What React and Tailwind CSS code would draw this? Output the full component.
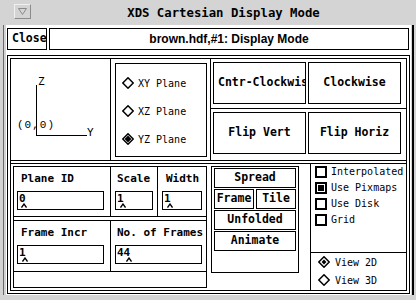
const boldMono = "font-['DejaVu_Sans_Mono',monospace] font-bold";
const thinMono = "font-['DejaVu_Sans_Mono',monospace]";

function Caret({ left }) {
  return (
    <svg
      width="6"
      height="5"
      viewBox="0 0 6 5"
      className="absolute top-[11px]"
      style={{ left }}
    >
      <path d="M0.5 4.5 L3 1 L5.5 4.5" fill="none" stroke="black" strokeWidth="1.3" />
    </svg>
  );
}

function Field({ label, value, ml, w, pl, caret, labelClass = '' }) {
  return (
    <div className="h-full overflow-hidden">
      <div className={`${boldMono} text-[11px] leading-[14px] whitespace-nowrap ${labelClass}`} style={{ paddingLeft: pl }}>
        {label}
      </div>
      <div
        className="relative mt-[5px] h-[19px] border border-black"
        style={{ marginLeft: ml, width: w }}
      >
        <span className={`${boldMono} text-[11px] leading-[13px] pl-[1px] block`}>{value}</span>
        <Caret left={caret} />
      </div>
    </div>
  );
}

function Diamond({ mode }) {
  return (
    <svg width="12" height="12" viewBox="0 0 12 12" className="shrink-0">
      <path d="M6 0.8 L11.2 6 L6 11.2 L0.8 6 Z" fill="white" stroke="black" strokeWidth="1.5" />
      {mode === 'full' && <path d="M6 2.6 L9.4 6 L6 9.4 L2.6 6 Z" fill="black" />}
      {mode === 'dot' && <path d="M6 3.6 L8.4 6 L6 8.4 L3.6 6 Z" fill="black" />}
    </svg>
  );
}

function Check({ label, on }) {
  return (
    <div className="h-[16px] flex items-center pl-[4px]">
      <div className="w-[12px] h-[12px] border-2 border-black flex items-center justify-center shrink-0">
        {on && <div className="w-[6px] h-[6px] bg-black" />}
      </div>
      <span className={`${thinMono} text-[10px] ml-[4px] leading-[12px]`}>{label}</span>
    </div>
  );
}

function SmallBtn({ children, className = '' }) {
  return (
    <div className={`h-[20px] border border-black flex items-center justify-center ${boldMono} text-[11.5px] ${className}`}>
      {children}
    </div>
  );
}

export default function App() {
  return (
    <div className="w-[416px] h-[300px] bg-[#d4d4d4] overflow-hidden flex flex-col">
      {/* title bar */}
      <div className="h-[25px] flex items-start shrink-0">
        <div className="ml-[14px] mt-[4px] w-[17px] h-[15px] border border-t-[#f0f0f0] border-l-[#f0f0f0] border-r-[#8c8c8c] border-b-[#8c8c8c] flex items-center justify-center">
          <svg width="9" height="7" viewBox="0 0 9 7">
            <path d="M0.5 0.5 H8.5 L4.5 6.5 Z" fill="none" stroke="#8a8a8a" />
          </svg>
        </div>
        <div className={`flex-1 text-center pt-[5px] ${boldMono} text-[12.3px] leading-[16px]`}>
          XDS Cartesian Display Mode
        </div>
      </div>

      <div className="flex h-[270px]">
        <div className="w-[3px]" />
        <div className="w-[1px] bg-[#6a6a6a]" />
        <div className="w-[2px]" />

        {/* window body */}
        <div className="w-[405px] bg-white flex flex-col">
          <div className="flex ml-[1px] mt-[3px] h-[22px] shrink-0">
            <div className={`w-[40px] border border-black overflow-hidden whitespace-nowrap pl-[4px] flex items-center ${boldMono} text-[11.5px]`}>
              Close
            </div>
            <div className="ml-[2px] w-[360px] border border-black flex items-center justify-center font-['Liberation_Sans',sans-serif] font-bold text-[12px]">
              brown.hdf,#1: Display Mode
            </div>
          </div>

          <div className="ml-[1px] mt-[5px] w-[403px] h-[239px] border border-black p-[2px]">
            <div className="h-full border border-black flex flex-col">
              {/* top section */}
              <div className="h-[102px] border-b border-black flex shrink-0">
                <div className="w-[100px] border-r border-black relative">
                  <span className={`absolute left-[27px] top-[15px] ${thinMono} text-[11px]`}>Z</span>
                  <div className="absolute left-[25px] top-[26px] w-[1px] h-[51px] bg-black" />
                  <div className="absolute left-[25px] top-[76px] w-[51px] h-[1px] bg-black" />
                  <span className={`absolute left-[76px] top-[66px] ${thinMono} text-[11px]`}>Y</span>
                  <span className={`absolute left-[6px] top-[58px] font-['Liberation_Mono',monospace] text-[11px] tracking-[1px]`}>(0,0)</span>
                </div>
                <div className="w-[99px] pl-[4px] pt-[4px]">
                  <div className="w-[92px] h-[94px] border border-black pt-[5px] flex flex-col">
                    {[
                      ['XY Plane', 'none'],
                      ['XZ Plane', 'none'],
                      ['YZ Plane', 'full'],
                    ].map(([t, m]) => (
                      <div key={t} className="h-[28px] flex items-center pl-[6px]">
                        <Diamond mode={m} />
                        <span className={`${thinMono} text-[10px] ml-[4px]`}>{t}</span>
                      </div>
                    ))}
                  </div>
                </div>
                <div className="flex-1 border-l border-black flex flex-col">
                  <div className="h-[50px] border-b border-black pt-[3px] pl-[2px] flex gap-[2px] shrink-0">
                    <div className={`w-[93px] h-[42px] border border-black flex items-center pl-[4px] overflow-hidden whitespace-nowrap ${boldMono} text-[11.5px]`}>
                      Cntr-Clockwise
                    </div>
                    <div className={`w-[93px] h-[42px] border border-black flex items-center justify-center ${boldMono} text-[11.5px]`}>
                      Clockwise
                    </div>
                  </div>
                  <div className="pt-[3px] pl-[2px] flex gap-[2px]">
                    <div className={`w-[93px] h-[42px] border border-black flex items-center justify-center ${boldMono} text-[11.5px]`}>
                      Flip Vert
                    </div>
                    <div className={`w-[93px] h-[42px] border border-black flex items-center justify-center ${boldMono} text-[11.5px]`}>
                      Flip Horiz
                    </div>
                  </div>
                </div>
              </div>

              {/* bottom section */}
              <div className="mt-[2px] border-t border-black flex-1 flex">
                <div className="pl-[2px] pt-[2px]">
                  <div className="w-[194px] h-[122px] border border-black">
                    <div className="h-[50px] border-b border-black flex pt-[5px]">
                      <div className="w-[97px] border-r border-black -mt-[5px] pt-[5px]">
                        <Field label="Plane ID" value="0" pl={7} ml={3} w={87} caret={3} />
                      </div>
                      <div className="w-[47px] border-r border-black -mt-[5px] pt-[5px]">
                        <Field label="Scale" value="1" pl={6} ml={4} w={38} caret={4} />
                      </div>
                      <div className="flex-1 -mt-[5px] pt-[5px]">
                        <Field label="Width" value="1" pl={8} ml={4} w={40} caret={4} />
                      </div>
                    </div>
                    <div className="mt-[3px] h-[52px] border-y border-black flex">
                      <div className="w-[97px] border-r border-black pt-[5px]">
                        <Field label="Frame Incr" value="1" pl={7} ml={3} w={87} caret={4} />
                      </div>
                      <div className="flex-1 pt-[5px]">
                        <Field label="No. of Frames" value="44" pl={6} ml={4} w={87} caret={10} />
                      </div>
                    </div>
                  </div>
                </div>

                <div className="ml-[4px] mt-[2px] w-[88px] h-[107px] border border-black px-[2px] pt-[1px] flex flex-col gap-[1px]">
                  <SmallBtn>Spread</SmallBtn>
                  <div className="flex gap-[2px]">
                    <SmallBtn className="w-[40px]">Frame</SmallBtn>
                    <SmallBtn className="flex-1">Tile</SmallBtn>
                  </div>
                  <SmallBtn>Unfolded</SmallBtn>
                  <SmallBtn>Animate</SmallBtn>
                </div>

                <div className="ml-[11px] flex-1 border-l border-black flex flex-col">
                  <div className="h-[89px] border-b border-black shrink-0">
                    <Check label="Interpolated" />
                    <Check label="Use Pixmaps" on />
                    <Check label="Use Disk" />
                    <Check label="Grid" />
                  </div>
                  <div className="pl-[7px]">
                    <div className="h-[18px] flex items-center">
                      <Diamond mode="dot" />
                      <span className={`${thinMono} text-[10px] ml-[5px]`}>View 2D</span>
                    </div>
                    <div className="h-[18px] flex items-center">
                      <Diamond mode="none" />
                      <span className={`${thinMono} text-[10px] ml-[5px]`}>View 3D</span>
                    </div>
                  </div>
                </div>
              </div>
            </div>
          </div>
        </div>

        <div className="w-[1px]" />
        <div className="w-[2px] bg-black" />
      </div>
    </div>
  );
}
